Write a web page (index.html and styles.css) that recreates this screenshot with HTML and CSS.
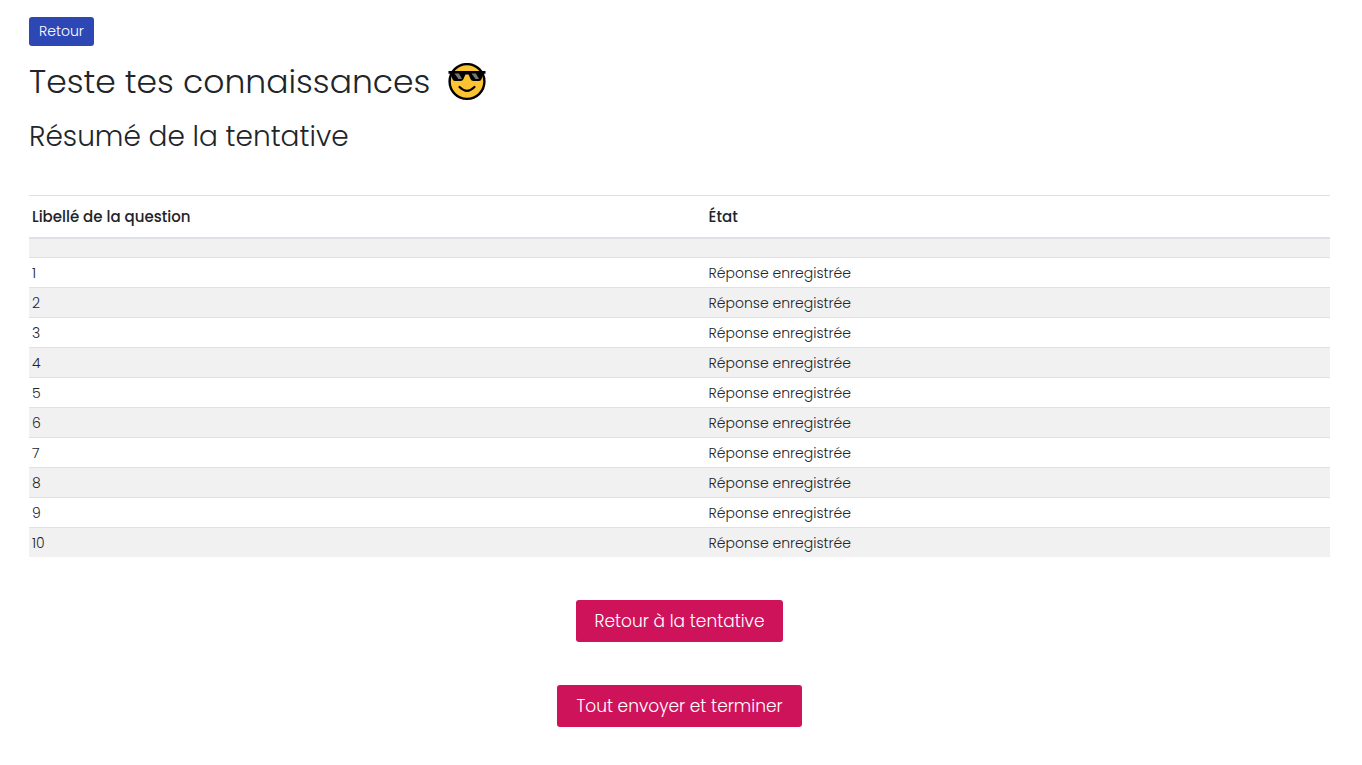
FILE: index.html
```html
<!DOCTYPE html>
<html lang="fr">
<head>
  <meta charset="UTF-8">
  <meta name="viewport" content="width=device-width, initial-scale=1.0">
  <title>Teste tes connaissances</title>
  <link rel="stylesheet" href="styles.css">
</head>
<body>
  <main class="page">
    <a class="btn btn-back" href="#">Retour</a>

    <h1>
      Teste tes connaissances
      <svg class="emoji" viewBox="0 0 40 38" role="img" aria-label="Lunettes de soleil">
        <circle cx="20" cy="18.500" r="17.400" fill="#fcc433" stroke="#000" stroke-width="2.400"/>
        <path d="M1.500 8h37v2.800h-2.200L34.600 16Q34 18 32 18h-5.500Q24.300 18 23.500 16L21.600 11.500h-3.200L16.500 16Q15.700 18 13.500 18H8Q6 18 5.400 16L3.700 10.800H1.500z" fill="#000"/>
        <path d="M7.500 10.500h4.500l3 5.500h-3.500zM24.500 10.500h4.500l3 5.500h-3.500z" fill="#777"/>
        <path d="M12.500 24q7.500 7.500 15 0" fill="none" stroke="#000" stroke-width="2.200" stroke-linecap="round"/>
      </svg>
    </h1>
    <h2>Résumé de la tentative</h2>

    <table class="summary">
      <thead>
        <tr>
          <th class="col-question" scope="col">Libellé de la question</th>
          <th scope="col">État</th>
        </tr>
      </thead>
      <tbody>
        <tr class="heading-row"><td colspan="2"></td></tr>
        <tr><td>1</td><td>Réponse enregistrée</td></tr>
        <tr><td>2</td><td>Réponse enregistrée</td></tr>
        <tr><td>3</td><td>Réponse enregistrée</td></tr>
        <tr><td>4</td><td>Réponse enregistrée</td></tr>
        <tr><td>5</td><td>Réponse enregistrée</td></tr>
        <tr><td>6</td><td>Réponse enregistrée</td></tr>
        <tr><td>7</td><td>Réponse enregistrée</td></tr>
        <tr><td>8</td><td>Réponse enregistrée</td></tr>
        <tr><td>9</td><td>Réponse enregistrée</td></tr>
        <tr><td>10</td><td>Réponse enregistrée</td></tr>
      </tbody>
    </table>

    <div class="actions">
      <button class="btn btn-action" type="button">Retour à la tentative</button>
      <button class="btn btn-action" type="submit">Tout envoyer et terminer</button>
    </div>
  </main>
</body>
</html>
```

FILE: styles.css
```css
* {
  box-sizing: border-box;
}
body {
  margin: 0;
  background-color: #fff;
  color: #212529;
  font-family: Poppins, Inter, "Open Sans", sans-serif;
  font-size: 14px;
  font-weight: 300;
  line-height: 24px;
}
.page {
  padding: 17px 32px 38px 29px;
}
.btn {
  border: none;
  border-radius: 3px;
  color: #fff;
  font-family: inherit;
  font-weight: 300;
  text-decoration: none;
  cursor: pointer;
}
.btn-back {
  display: inline-block;
  padding: 0 10px;
  background-color: #2d47b5;
  line-height: 29px;
}
h1,
h2 {
  margin: 0;
  font-weight: 300;
}
h1 {
  display: flex;
  align-items: center;
  gap: 17px;
  margin-top: 12px;
  font-size: 33px;
  line-height: 48px;
}
.emoji {
  width: 40px;
  height: 38px;
}
h2 {
  margin-top: 13px;
  font-size: 28px;
  line-height: 36px;
}
.summary {
  width: 100%;
  margin-top: 40px;
  border-spacing: 0;
  table-layout: fixed;
}
.summary th,
.summary td {
  padding: 0 3px;
  border-top: 1px solid #dee2e6;
  text-align: left;
}
.summary th {
  height: 44px;
  border-bottom: 2px solid #dee2e6;
  font-size: 15px;
  font-weight: 500;
}
.summary td {
  height: 30px;
}
.summary tbody tr:nth-child(odd) {
  background-color: #f1f1f1;
}
.summary .heading-row td {
  height: 18px;
  border-top: none;
}
.col-question {
  width: 52%;
}
.actions {
  display: flex;
  flex-direction: column;
  align-items: center;
  gap: 43px;
  margin-top: 43px;
}
.btn-action {
  padding: 0 19px;
  background-color: #cf135b;
  font-size: 17px;
  line-height: 42px;
}
```
